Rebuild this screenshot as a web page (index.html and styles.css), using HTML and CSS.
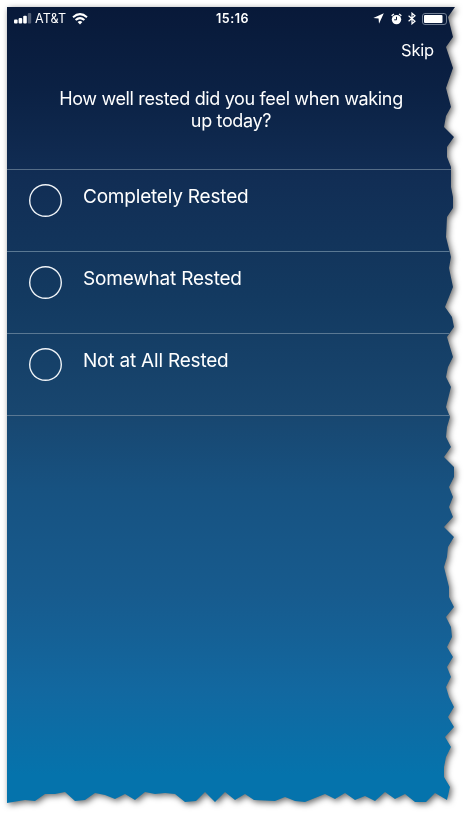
FILE: index.html
```
<!DOCTYPE html>
<html lang="en">
<head>
<meta charset="utf-8">
<title>Rest survey</title>
<link rel="stylesheet" href="styles.css">
</head>
<body>
<div class="paper">
<main class="screen">
  <header class="status">
    <div class="carrier">
      <svg class="signal" width="18" height="11" viewBox="0 0 18 11" fill="#fff"><rect x="0" y="6.5" width="3.6" height="4" rx="1"/><rect x="4.6" y="5" width="3.6" height="5.5" rx="1"/><rect x="9.2" y="2.7" width="3.6" height="7.8" rx="1"/><rect x="13.8" y="0" width="3.4" height="10.5" rx="1" opacity=".3"/></svg>
      <span class="network">AT&amp;T</span>
      <svg class="wifi" width="16" height="12" viewBox="0 0 16 12" fill="none" stroke="#fff" stroke-width="2"><path d="M1 4.3Q8-2 15 4.3M3.6 7Q8 3.2 12.4 7"/><path d="M5.6 9Q8 7 10.4 9L8 11.5Z" fill="#fff" stroke="none"/></svg>
    </div>
    <span class="time">15:16</span>
    <div class="indicators">
      <svg width="11" height="11" viewBox="0 0 11 11" fill="#fff"><path d="M10.8.2 6 10.8 5.6 5.6.3 5.1Z"/></svg>
      <svg class="alarm" width="11" height="12" viewBox="0 0 11 12" fill="none" stroke="#fff"><circle cx="5.5" cy="6.6" r="4.7" fill="#fff" stroke="none"/><path d="M.6 2.8 2.9 1M10.4 2.8 8.1 1" stroke-width="1.3"/><path class="hands" d="M5.5 3.8V6.8H3.2"/></svg>
      <svg class="bluetooth" width="8" height="13" viewBox="0 0 8 13" fill="none" stroke="#fff" stroke-width="1.2"><path d="M.6 3.7 7 9.2 4 11.8V1.2L7 3.8.6 9.3"/></svg>
      <svg class="battery" width="27" height="12" viewBox="0 0 27 12"><rect x=".5" y=".5" width="24" height="11" rx="2.5" fill="none" stroke="#6f7d93"/><rect x="2" y="2" width="18.5" height="8" rx="1" fill="#fff"/></svg>
    </div>
  </header>
  <nav class="nav"><span class="skip">Skip</span></nav>
  <h1 class="question">How well rested did you feel when waking<br>up today?</h1>
  <ul class="options">
    <li class="option"><span class="radio"></span><span class="label">Completely Rested</span></li>
    <li class="option"><span class="radio"></span><span class="label">Somewhat Rested</span></li>
    <li class="option"><span class="radio"></span><span class="label">Not at All Rested</span></li>
  </ul>
</main>
</div>
</body>
</html>
```
FILE: styles.css
```
* { box-sizing: border-box; }
body {
  margin: 0;
  background: #fff;
  color: #fff;
  font-family: Inter, "Liberation Sans", sans-serif;
  overflow: hidden;
}
.paper {
  width: 466px;
  height: 814px;
  filter: drop-shadow(2px 2px 3px rgba(0, 0, 0, .6));
}
.screen {
  width: 466px;
  height: 814px;
  padding: 7px 11px 0 7px;
  background: linear-gradient(#081939 7px, #0b2144 90px, #112d54 175px, #133a61 300px, #18466f 410px, #175281 490px, #175b8e 595px, #1268a0 690px, #0573ac 775px, #0573ac 814px);
  clip-path: polygon(7px 7px, 455px 7px, 448px 17px, 453px 37px, 446px 47px, 453px 68px, 446px 88px, 451px 107px, 446px 116px, 444px 127px, 454px 137px, 447px 147px, 447px 157px, 451px 167px, 451px 187px, 453px 197px, 453px 208px, 447px 217px, 446px 237px, 451px 257px, 449px 268px, 453px 287px, 445px 307px, 452px 317px, 454px 327px, 447px 337px, 453px 357px, 448px 367px, 446px 377px, 451px 387px, 446px 407px, 450px 417px, 447px 427px, 446px 437px, 451px 447px, 444px 457px, 454px 467px, 454px 477px, 449px 487px, 453px 497px, 449px 507px, 453px 517px, 444px 527px, 454px 537px, 448px 547px, 447px 557px, 444px 567px, 449px 587px, 449px 597px, 454px 607px, 446px 617px, 451px 627px, 452px 637px, 447px 647px, 453px 657px, 447px 667px, 451px 677px, 446px 687px, 449px 697px, 454px 707px, 448px 717px, 454px 727px, 445px 737px, 451px 747px, 446px 757px, 444px 767px, 444px 777px, 450px 787px, 447px 800px, 435px 793px, 426px 802px, 415px 802px, 405px 794px, 395px 799px, 385px 792px, 375px 801px, 365px 796px, 355px 800px, 345px 793px, 335px 799px, 325px 794px, 305px 802px, 295px 801px, 285px 797px, 275px 801px, 254px 800px, 245px 794px, 235px 800px, 225px 792px, 215px 802px, 205px 792px, 196px 801px, 185px 802px, 175px 794px, 165px 793px, 155px 794px, 145px 792px, 135px 800px, 125px 794px, 115px 799px, 105px 795px, 95px 793px, 85px 800px, 75px 801px, 65px 792px, 55px 794px, 45px 794px, 35px 801px, 25px 800px, 7px 803px);
}
.status {
  display: grid;
  grid-template-columns: 1fr auto 1fr;
  align-items: center;
  width: 453px;
  height: 23px;
  padding: 0 9px 0 7px;
}
.carrier, .indicators { display: flex; align-items: center; }
.network { margin: 0 6px 0 3px; font-size: 12.5px; letter-spacing: .15px; }
.time { font-size: 12.5px; font-weight: 600; letter-spacing: .55px; }
.indicators { justify-content: flex-end; padding-right: 2px; }
.alarm { margin-left: 7px; }
.hands { stroke: #081939; }
.bluetooth { margin-left: 6px; }
.battery { margin-left: 6px; }
.nav {
  display: flex;
  justify-content: flex-end;
  padding: 10px 14px 0 0;
  height: 58px;
  width: 441px;
}
.skip { font-size: 16.5px; line-height: 20px; letter-spacing: -.2px; }
.question {
  margin: 0;
  width: 448px;
  height: 81px;
  font-size: 18px;
  font-weight: 400;
  line-height: 22px;
  letter-spacing: -.35px;
  text-align: center;
}
.options { margin: 0; padding: 0; list-style: none; border-top: 1px solid #566d87; }
.option {
  display: flex;
  height: 82px;
  padding: 14px 0 0 22px;
  border-bottom: 1px solid #5a7893;
}
.radio { width: 33px; height: 33px; box-shadow: inset 0 0 0 1.4px #f0f4f8; border-radius: 50%; }
.label { margin-left: 21px; font-size: 19px; line-height: 26px; letter-spacing: -.2px; }
```
